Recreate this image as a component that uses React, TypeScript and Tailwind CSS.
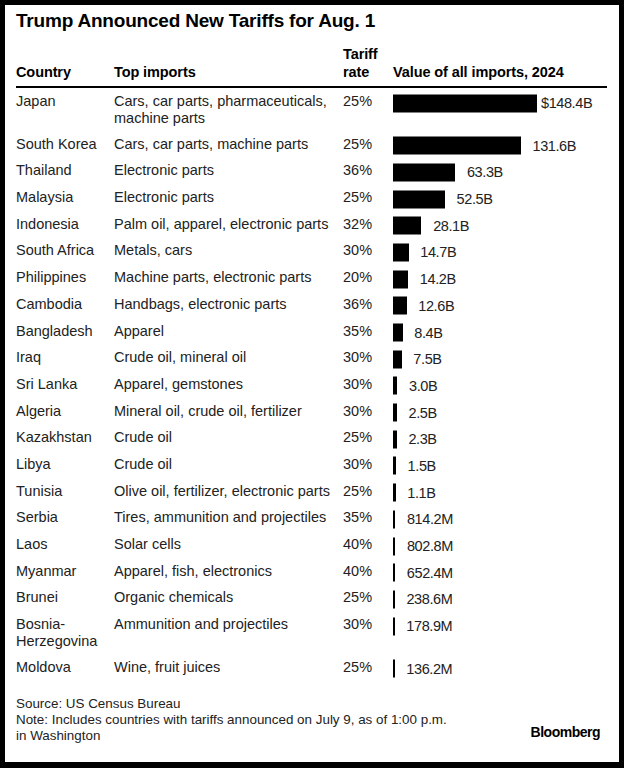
import React from "react";

type Row = { country: React.ReactNode; imports: React.ReactNode; rate: string; v: number; label: string; dollar?: boolean; multi?: boolean };

const rows: Row[] = [
  { country: "Japan", imports: <>Cars, car parts, pharmaceuticals,<br />machine parts</>, rate: "25%", v: 148.4, label: "148.4B", dollar: true, multi: true },
  { country: "South Korea", imports: "Cars, car parts, machine parts", rate: "25%", v: 131.6, label: "131.6B" },
  { country: "Thailand", imports: "Electronic parts", rate: "36%", v: 63.3, label: "63.3B" },
  { country: "Malaysia", imports: "Electronic parts", rate: "25%", v: 52.5, label: "52.5B" },
  { country: "Indonesia", imports: "Palm oil, apparel, electronic parts", rate: "32%", v: 28.1, label: "28.1B" },
  { country: "South Africa", imports: "Metals, cars", rate: "30%", v: 14.7, label: "14.7B" },
  { country: "Philippines", imports: "Machine parts, electronic parts", rate: "20%", v: 14.2, label: "14.2B" },
  { country: "Cambodia", imports: "Handbags, electronic parts", rate: "36%", v: 12.6, label: "12.6B" },
  { country: "Bangladesh", imports: "Apparel", rate: "35%", v: 8.4, label: "8.4B" },
  { country: "Iraq", imports: "Crude oil, mineral oil", rate: "30%", v: 7.5, label: "7.5B" },
  { country: "Sri Lanka", imports: "Apparel, gemstones", rate: "30%", v: 3.0, label: "3.0B" },
  { country: "Algeria", imports: "Mineral oil, crude oil, fertilizer", rate: "30%", v: 2.5, label: "2.5B" },
  { country: "Kazakhstan", imports: "Crude oil", rate: "25%", v: 2.3, label: "2.3B" },
  { country: "Libya", imports: "Crude oil", rate: "30%", v: 1.5, label: "1.5B" },
  { country: "Tunisia", imports: "Olive oil, fertilizer, electronic parts", rate: "25%", v: 1.1, label: "1.1B" },
  { country: "Serbia", imports: "Tires, ammunition and projectiles", rate: "35%", v: 0.8142, label: "814.2M" },
  { country: "Laos", imports: "Solar cells", rate: "40%", v: 0.8028, label: "802.8M" },
  { country: "Myanmar", imports: "Apparel, fish, electronics", rate: "40%", v: 0.6524, label: "652.4M" },
  { country: "Brunei", imports: "Organic chemicals", rate: "25%", v: 0.2386, label: "238.6M" },
  { country: <>Bosnia-<br />Herzegovina</>, imports: "Ammunition and projectiles", rate: "30%", v: 0.1789, label: "178.9M", multi: true },
  { country: "Moldova", imports: "Wine, fruit juices", rate: "25%", v: 0.1362, label: "136.2M" },
];

export default function App() {
  return (
    <div className="w-[624px] h-[768px] bg-black pt-[5px] pl-[5px] pr-[5px] pb-[6px]" style={{ fontFamily: '"Liberation Sans", Arial, sans-serif' }}>
      <div className="w-full h-full bg-white pl-[11px] pr-[12px] pt-[4px] flex flex-col text-[#222]">
        <h1 className="text-[19px] leading-[23px] font-bold text-black tracking-[-0.2px]">Trump Announced New Tariffs for Aug. 1</h1>
        <div className="mt-[13px] flex items-end pb-[5px] border-b-2 border-black text-[14.5px] leading-[18px] font-bold text-black tracking-[-0.1px]">
          <div className="w-[98px]">Country</div>
          <div className="w-[229px]">Top imports</div>
          <div className="w-[50px]">Tariff<br />rate</div>
          <div>Value of all imports, 2024</div>
        </div>
        <div className="flex flex-col text-[14.5px] leading-[17px]">
          {rows.map((r, i) => (
            <div key={i} className={`flex items-start pt-[5px] pb-[4.7px] ${r.multi ? "leading-[16.5px]" : "leading-[17px]"}`}>
              <div className="w-[98px] whitespace-nowrap">{r.country}</div>
              <div className="w-[229px] whitespace-nowrap">{r.imports}</div>
              <div className="w-[50px] leading-[17px]">{r.rate}</div>
              <div className="flex items-center h-[17px] translate-y-[1.5px]">
                <div className="h-[18px] shrink-0 bg-black" style={{ width: `${r.v * 0.96 + 1.5}px` }} />
                <span className="ml-[4px] whitespace-nowrap tracking-[-0.4px] leading-[17px]">
                  <span className={r.dollar ? "" : "invisible"}>$</span>
                  {r.label}
                </span>
              </div>
            </div>
          ))}
        </div>
        <div className="mt-[16px] flex items-end justify-between pr-[7px]">
          <div className="text-[13.4px] leading-[16px]">
            Source: US Census Bureau<br />
            Note: Includes countries with tariffs announced on July 9, as of 1:00 p.m.<br />
            in Washington
          </div>
          <div className="text-[14px] font-bold text-black leading-[17px] tracking-[-0.5px] mb-[3px]">Bloomberg</div>
        </div>
      </div>
    </div>
  );
}
